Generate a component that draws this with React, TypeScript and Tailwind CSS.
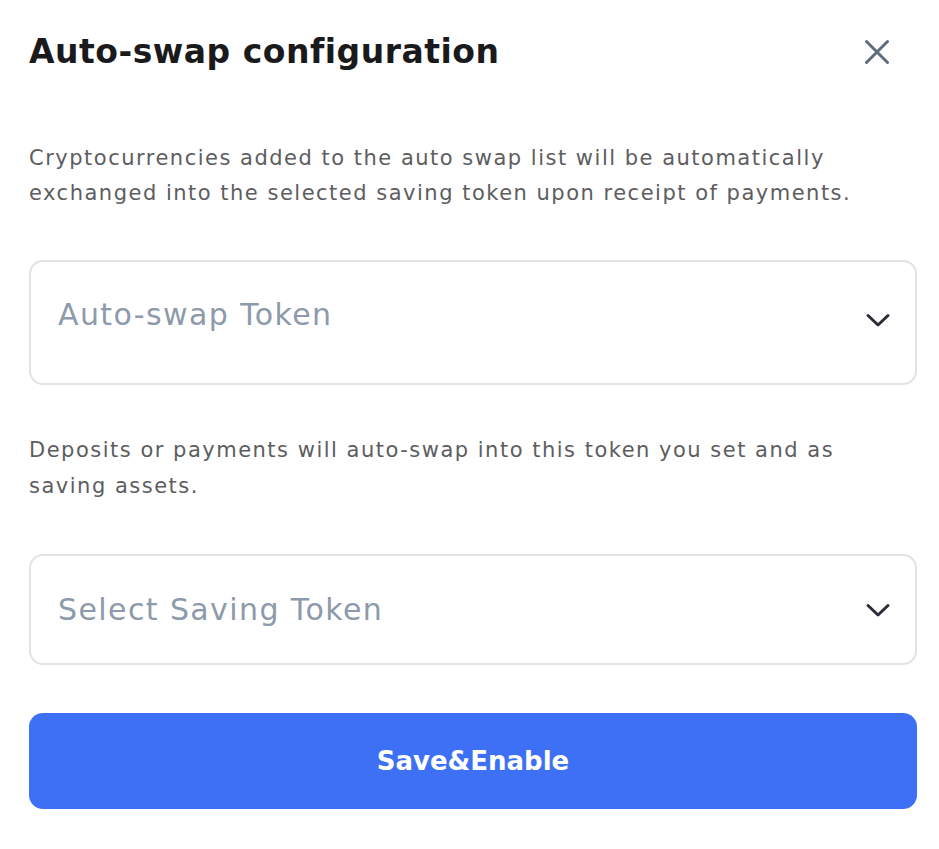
function Chevron({ className }: { className?: string }) {
  return (
    <svg width="26" height="16" viewBox="0 0 26 16" fill="none" className={className}>
      <path d="M3 3.5 L13 13 L23 3.5" stroke="currentColor" strokeWidth="3" strokeLinecap="round" strokeLinejoin="round" />
    </svg>
  );
}

function CloseIcon() {
  return (
    <svg width="26" height="26" viewBox="0 0 26 26" fill="none">
      <path d="M2.5 2.5 L23.5 23.5 M23.5 2.5 L2.5 23.5" stroke="currentColor" strokeWidth="3" strokeLinecap="round" />
    </svg>
  );
}

function TokenSelect({ label, className, chevronClass }: { label: string; className: string; chevronClass?: string }) {
  return (
    <button
      type="button"
      className={`flex w-full items-center justify-between rounded-[14px] border-2 border-[#e1e3e7] bg-white pl-[27px] pr-[24px] text-left ${className}`}
    >
      <span className="text-[30px] tracking-[1.4px] text-[#8d9aab]">{label}</span>
      <Chevron className={`text-[#2b2d3a] ${chevronClass ?? ""}`} />
    </button>
  );
}

export default function App() {
  return (
    <div className="min-h-screen bg-white font-['DejaVu_Sans',sans-serif]">
      <div className="w-[939px] pl-[29px] pr-[22px] pt-[28px]">
        {/* Header */}
        <div className="flex items-center justify-between">
          <h2 className="text-[33px] font-bold leading-[48px] tracking-[0.5px] text-[#1a1a1c]">
            Auto-swap configuration
          </h2>
          <button type="button" className="mr-[27px] text-[#5e6d7b]">
            <CloseIcon />
          </button>
        </div>

        <p className="mt-[65px] text-[21px] leading-[35px] tracking-[1.5px] text-[#5d5d5f]">
          Cryptocurrencies added to the auto swap list will be automatically
          <br />
          exchanged into the selected saving token upon receipt of payments.
        </p>

        <TokenSelect
          label="Auto-swap Token"
          className="mt-[49px] h-[125px] pb-[16px]"
          chevronClass="mt-[10px]"
        />

        <p className="mt-[47px] text-[21px] leading-[36px] tracking-[1.5px] text-[#5d5d5f]">
          Deposits or payments will auto-swap into this token you set and as
          <br />
          saving assets.
        </p>

        <TokenSelect label="Select Saving Token" className="mt-[50px] h-[111px]" />

        <button
          type="button"
          className="mt-[48px] flex h-[96px] w-full items-center justify-center rounded-[14px] bg-[#3e70f6] text-[26px] font-bold text-white"
        >
          Save&amp;Enable
        </button>
      </div>
    </div>
  );
}
